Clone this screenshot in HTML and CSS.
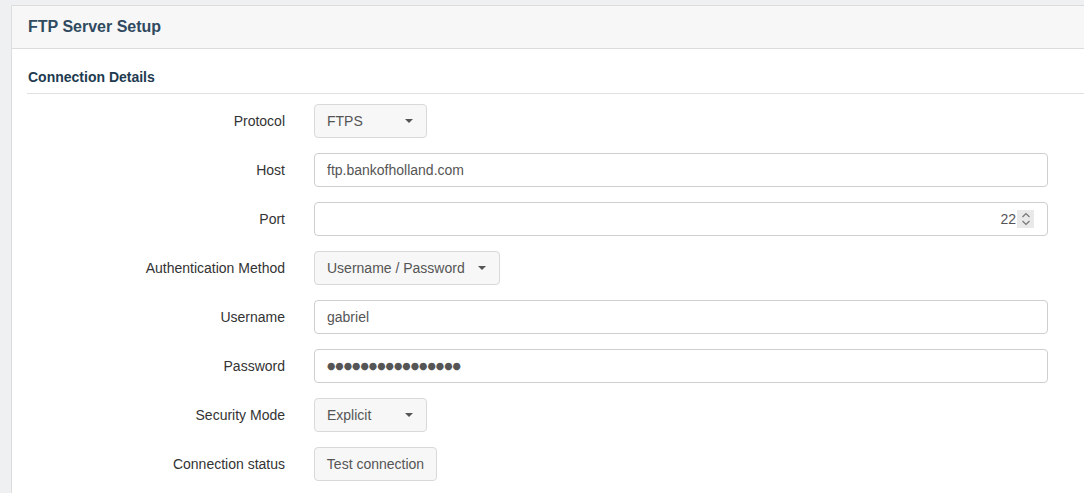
FILE: index.html
```html
<!DOCTYPE html>
<html>
<head>
<meta charset="utf-8">
<link rel="stylesheet" href="styles.css">
</head>
<body>
<div class="panel">
  <div class="panel-header"><h1 class="panel-title">FTP Server Setup</h1></div>
  <div class="panel-body">
    <h2 class="section-title">Connection Details</h2>
    <div class="form">
      <div class="label">Protocol</div>
      <div class="field"><div class="select w-protocol"><span>FTPS</span><span class="caret"></span></div></div>

      <div class="label">Host</div>
      <div class="field"><input class="input" type="text" value="ftp.bankofholland.com"></div>

      <div class="label">Port</div>
      <div class="field">
        <div class="input number"><span class="num">22</span>
          <span class="spin"><svg width="12" height="16" viewBox="0 0 12 16"><path d="M2.5 6 L6 2.5 L9.5 6" fill="none" stroke="#777" stroke-width="1.2"/><path d="M2.5 10 L6 13.5 L9.5 10" fill="none" stroke="#777" stroke-width="1.2"/></svg></span>
        </div>
      </div>

      <div class="label">Authentication Method</div>
      <div class="field"><div class="select w-auth"><span>Username / Password</span><span class="caret"></span></div></div>

      <div class="label">Username</div>
      <div class="field"><input class="input" type="text" value="gabriel"></div>

      <div class="label">Password</div>
      <div class="field"><div class="input pw">●●●●●●●●●●●●●●●●</div></div>

      <div class="label">Security Mode</div>
      <div class="field"><div class="select w-protocol"><span>Explicit</span><span class="caret"></span></div></div>

      <div class="label">Connection status</div>
      <div class="field"><div class="btn">Test connection</div></div>
    </div>
  </div>
</div>
</body>
</html>
```

FILE: styles.css
```css
html, body {
  margin: 0;
  padding: 0;
  background: #eef0f2;
  overflow: hidden;
  font-family: "Liberation Sans", Arial, sans-serif;
  font-size: 14px;
  color: #333;
}
body {
  padding: 5px 0 0 11px;
  height: 488px;
}
.panel {
  background: #fff;
  border: 1px solid #dcdcdc;
  border-right: none;
  border-bottom: none;
  border-radius: 2px 0 0 0;
  margin-right: -40px;
  height: 490px;
}
.panel-header {
  background: #f7f7f7;
  border-bottom: 1px solid #dcdcdc;
  height: 42px;
  display: flex;
  align-items: center;
  padding-left: 16px;
}
.panel-title {
  margin: 0;
  font-size: 16px;
  font-weight: bold;
  color: #2f4a5f;
}
.panel-body {
  padding: 20px 0 0 15px;
}
.section-title {
  margin: 0;
  font-size: 14px;
  font-weight: bold;
  color: #1e3a50;
  padding: 0 0 0 1px;
  height: 24px;
  line-height: 16px;
  border-bottom: 1px solid #e0e0e0;
}
.form {
  display: grid;
  grid-template-columns: 258px 734px;
  column-gap: 29px;
  row-gap: 15px;
  padding-top: 10px;
}
.label {
  text-align: right;
  height: 34px;
  line-height: 34px;
  color: #333;
  white-space: nowrap;
}
.field {
  height: 34px;
  display: flex;
}
.input {
  box-sizing: border-box;
  width: 734px;
  height: 34px;
  border: 1px solid #cfcfcf;
  border-radius: 4px;
  padding: 0 12px;
  font-family: "Liberation Sans", Arial, sans-serif;
  font-size: 14px;
  color: #555;
  background: #fff;
  outline: none;
  margin: 0;
}
.pw {
  font-family: "DejaVu Sans", sans-serif;
  font-size: 9.6px;
  line-height: 32px;
  color: #555;
}
.number {
  display: flex;
  align-items: center;
  justify-content: flex-end;
  padding-right: 13px;
}
.num {
  color: #555;
}
.spin {
  width: 17px;
  height: 18px;
  background: #e9e9e9;
  display: flex;
  align-items: center;
  justify-content: center;
  margin-left: 1px;
}
.select {
  box-sizing: border-box;
  height: 34px;
  border: 1px solid #d9d9d9;
  border-radius: 4px;
  background: #f7f7f7;
  display: flex;
  align-items: center;
  justify-content: space-between;
  padding: 0 13px 0 12px;
  color: #555;
}
.w-protocol { width: 113px; }
.w-auth { width: 186px; }
.caret {
  width: 0;
  height: 0;
  border-left: 4px solid transparent;
  border-right: 4px solid transparent;
  border-top: 4px solid #555;
}
.btn {
  box-sizing: border-box;
  height: 34px;
  width: 123px;
  border: 1px solid #d9d9d9;
  border-radius: 4px;
  background: #f7f7f7;
  color: #555;
  display: flex;
  align-items: center;
  justify-content: center;
}
```
